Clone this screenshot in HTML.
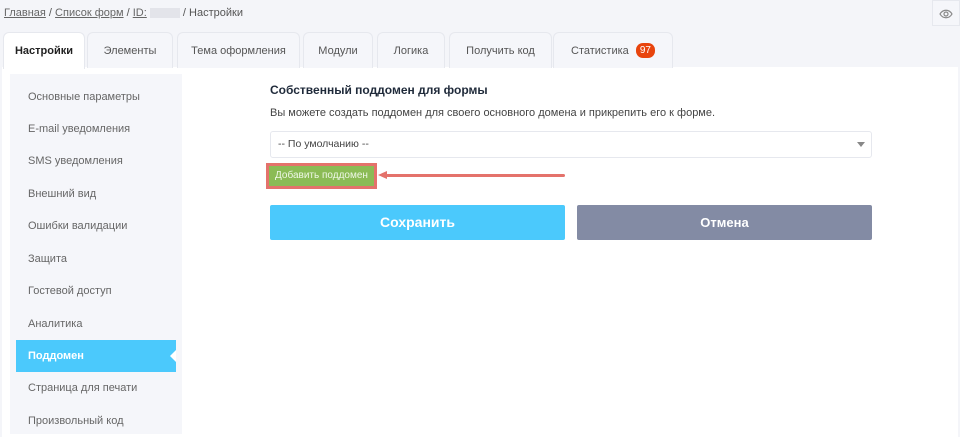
<!DOCTYPE html><html><head><meta charset="utf-8"><style>
*{margin:0;padding:0;box-sizing:border-box}
body{width:960px;height:432px;overflow:hidden;background:#f4f5f9;font-family:"Liberation Sans","Noto Sans CJK SC",sans-serif;position:relative;color:#333}
.a{position:absolute}
.bc{left:4px;top:7px;font-size:11px;color:#555}
.bc u{color:#666}
.tab{position:absolute;top:32px;height:36px;background:#f5f6fa;border:1px solid #e6e8ee;border-bottom:none;border-radius:6px 6px 0 0;font-size:11px;color:#555;text-align:center;line-height:36px}
.panel{left:2px;top:67px;width:956px;height:370px;background:#fff}
.side{left:10px;top:74px;width:172px;height:360px;background:#f5f6fa}
.it{position:absolute;left:28px;font-size:11px;color:#666}
</style></head><body>
<div class="a bc"><u>Главная</u> / <u>Список форм</u> / <u>ID:</u> <span style="display:inline-block;width:30px;height:10px;background:#e3e4ea;vertical-align:middle"></span> / Настройки</div>
<div class="a" style="left:932px;top:0;width:28px;height:26px;border:1px solid #e6e8ee;background:#f5f6fa"><svg width="26" height="24" viewBox="0 0 26 24"><path d="M7 13c3-5 9-5 12 0c-3 5-9 5-12 0z" fill="none" stroke="#888" stroke-width="1.2"/><circle cx="13" cy="13" r="2" fill="none" stroke="#888" stroke-width="1.2"/></svg></div>
<div class="a panel"></div>
<div class="tab" style="left:3px;width:82px;background:#fff;color:#222;font-weight:bold;height:37px">Настройки</div>
<div class="tab" style="left:87px;width:86px">Элементы</div>
<div class="tab" style="left:177px;width:123px">Тема оформления</div>
<div class="tab" style="left:303px;width:70px">Модули</div>
<div class="tab" style="left:377px;width:68px">Логика</div>
<div class="tab" style="left:449px;width:103px">Получить код</div>
<div class="tab" style="left:553px;width:120px">Статистика <span style="display:inline-block;background:#e8440d;color:#fff;font-size:10px;line-height:15px;border-radius:7px;padding:0 4px;margin-left:4px;vertical-align:1px">97</span></div>
<div class="a side"></div>
<div class="it" style="top:91px">Основные параметры</div>
<div class="it" style="top:123px">E-mail уведомления</div>
<div class="it" style="top:155px">SMS уведомления</div>
<div class="it" style="top:188px">Внешний вид</div>
<div class="it" style="top:220px">Ошибки валидации</div>
<div class="it" style="top:253px">Защита</div>
<div class="it" style="top:285px">Гостевой доступ</div>
<div class="it" style="top:318px">Аналитика</div>
<div class="a" style="left:16px;top:340px;width:160px;height:32px;background:#4bc9fc"></div>
<div class="a" style="left:170px;top:350px;width:0;height:0;border:6px solid transparent;border-right-color:#fff;border-left:none"></div>
<div class="it" style="top:350px;color:#fff;font-weight:bold">Поддомен</div>
<div class="it" style="top:382px">Страница для печати</div>
<div class="it" style="top:415px">Произвольный код</div>
<div class="a" style="left:270px;top:83px;font-size:12px;font-weight:bold;color:#1f2a3a">Собственный поддомен для формы</div>
<div class="a" style="left:270px;top:107px;font-size:11px;color:#444">Вы можете создать поддомен для своего основного домена и прикрепить его к форме.</div>
<div class="a" style="left:270px;top:131px;width:602px;height:27px;border:1px solid #e6e8ee;border-radius:3px;font-size:10.5px;line-height:25px;padding-left:7px;color:#444">-- По умолчанию --</div>
<div class="a" style="left:857px;top:142px;border:4px solid transparent;border-top:5px solid #888;border-bottom:none"></div>
<div class="a" style="left:266px;top:163px;width:111px;height:26px;border:3px solid #e4726b;background:#8bbb55;color:#eef7e6;font-size:10px;text-align:center;line-height:20px">Добавить поддомен</div>
<div class="a" style="left:386px;top:174px;width:179px;height:3px;background:#e4726b;border-radius:2px"></div>
<div class="a" style="left:378px;top:171px;border:4px solid transparent;border-right:9px solid #e4726b;border-left:none"></div>
<div class="a" style="left:270px;top:205px;width:295px;height:35px;background:#4bc9fc;border-radius:2px;color:#fff;font-weight:bold;font-size:14px;text-align:center;line-height:35px">Сохранить</div>
<div class="a" style="left:577px;top:205px;width:295px;height:35px;background:#838ba4;border-radius:2px;color:#fff;font-weight:bold;font-size:13px;text-align:center;line-height:35px">Отмена</div>
</body></html>
